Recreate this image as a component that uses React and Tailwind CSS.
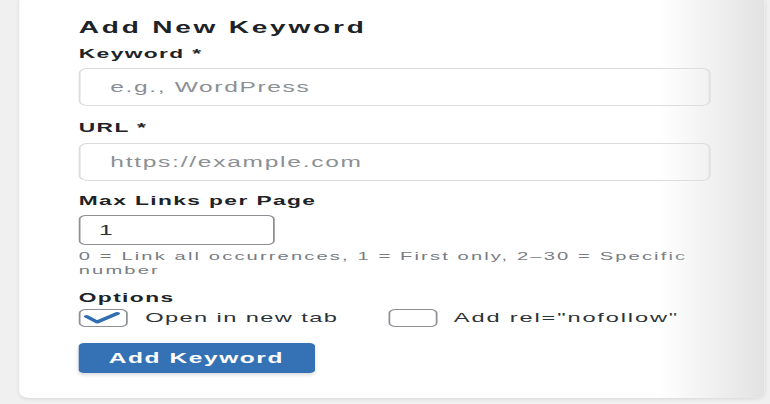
import { useState } from "react";

// the reference is a narrow form that was stretched sideways, so the page is
// laid out at 440px and widened with scale-x
export default function App() {
  const [newTab, setNewTab] = useState(true);
  const [nofollow, setNofollow] = useState(false);

  const check = (
    <svg width="26" height="16" viewBox="0 0 26 16" fill="none">
      <path d="M3.5 6.5 L9.5 12 L21 3.5" stroke="#2f6fb0" strokeWidth="3" strokeLinecap="round" strokeLinejoin="round" />
    </svg>
  );

  return (
    <div className="w-[770px] h-[404px] overflow-hidden bg-[#f0f0f1] font-['Liberation_Sans',Arial,sans-serif]">
      <div className="w-[440px] h-[404px] origin-top-left scale-x-[1.75]">
        <div className="relative ml-[11px] mt-[-4px] w-[426px] h-[402px] overflow-hidden rounded-[6px] bg-white pt-[21.5px] pl-[34px] shadow-[0_1px_3px_rgba(0,0,0,0.1)]">
          <h2 className="text-[16px] leading-[20px] font-bold tracking-[1.6px] text-[#1d2327]">Add New Keyword</h2>

          <label className="mt-[8.5px] block text-[13px] leading-[16px] font-bold tracking-[0.8px] text-[#1d2327]">Keyword *</label>
          <input
            type="text"
            placeholder="e.g., WordPress"
            className="mt-[6px] block h-[38px] w-[361px] rounded-[5px] border border-[#dcdcde] bg-white pl-[17px] text-[14px] tracking-[0.95px] text-[#2c3338] outline-none placeholder:text-[#8c8f94]"
          />

          <label className="mt-[14px] block text-[13px] leading-[16px] font-bold tracking-[0.8px] text-[#1d2327]">URL *</label>
          <input
            type="text"
            placeholder="https://example.com"
            className="mt-[6.5px] block h-[38px] w-[361px] rounded-[5px] border border-[#dcdcde] bg-white pl-[17px] text-[14px] tracking-[1px] text-[#2c3338] outline-none placeholder:text-[#8c8f94]"
          />

          <label className="mt-[12.5px] block text-[13px] leading-[16px] font-bold tracking-[0.8px] text-[#1d2327]">Max Links per Page</label>
          <input
            type="text"
            defaultValue="1"
            className="mt-[6px] block h-[30px] w-[112px] rounded-[4px] border border-[#8c8f94] bg-white pl-[10.5px] text-[14px] tracking-[0.8px] text-[#2c3338] outline-none"
          />
          <p className="mt-[5px] w-[361px] text-[11.5px] leading-[13.5px] tracking-[1.22px] text-[#787c82]">
            0 = Link all occurrences, 1 = First only, 2–30 = Specific number
          </p>

          <p className="mt-[13px] text-[13px] leading-[16px] font-bold tracking-[0.8px] text-[#1d2327]">Options</p>
          <div className="mt-[3.3px] flex h-[18px] items-center">
            <button
              type="button"
              onClick={() => setNewTab(!newTab)}
              className="flex h-[18px] w-[28px] items-center justify-center rounded-[4px] border border-[#8c8f94] bg-white"
            >
              {newTab && check}
            </button>
            <span className="ml-[10px] text-[13.5px] tracking-[0.8px] text-[#2c3338]">Open in new tab</span>

            <button
              type="button"
              onClick={() => setNofollow(!nofollow)}
              className="ml-[28.5px] flex h-[18px] w-[28px] items-center justify-center rounded-[4px] border border-[#8c8f94] bg-white"
            >
              {nofollow && check}
            </button>
            <span className="ml-[9.5px] text-[13.5px] tracking-[1.05px] text-[#2c3338]">Add rel="nofollow"</span>
          </div>

          <button
            type="button"
            className="mt-[16px] block h-[30px] w-[134.5px] rounded-[3px] bg-[#3571b5] text-[14px] font-bold tracking-[0.9px] text-white shadow-[0_2px_3px_rgba(0,0,0,0.15)]"
          >
            Add Keyword
          </button>

          {/* fade on the right edge of the card */}
          <div className="pointer-events-none absolute right-0 top-0 bottom-0 w-[60px] bg-gradient-to-r from-white/0 to-[#e2e2e2]" />
        </div>
      </div>
    </div>
  );
}
